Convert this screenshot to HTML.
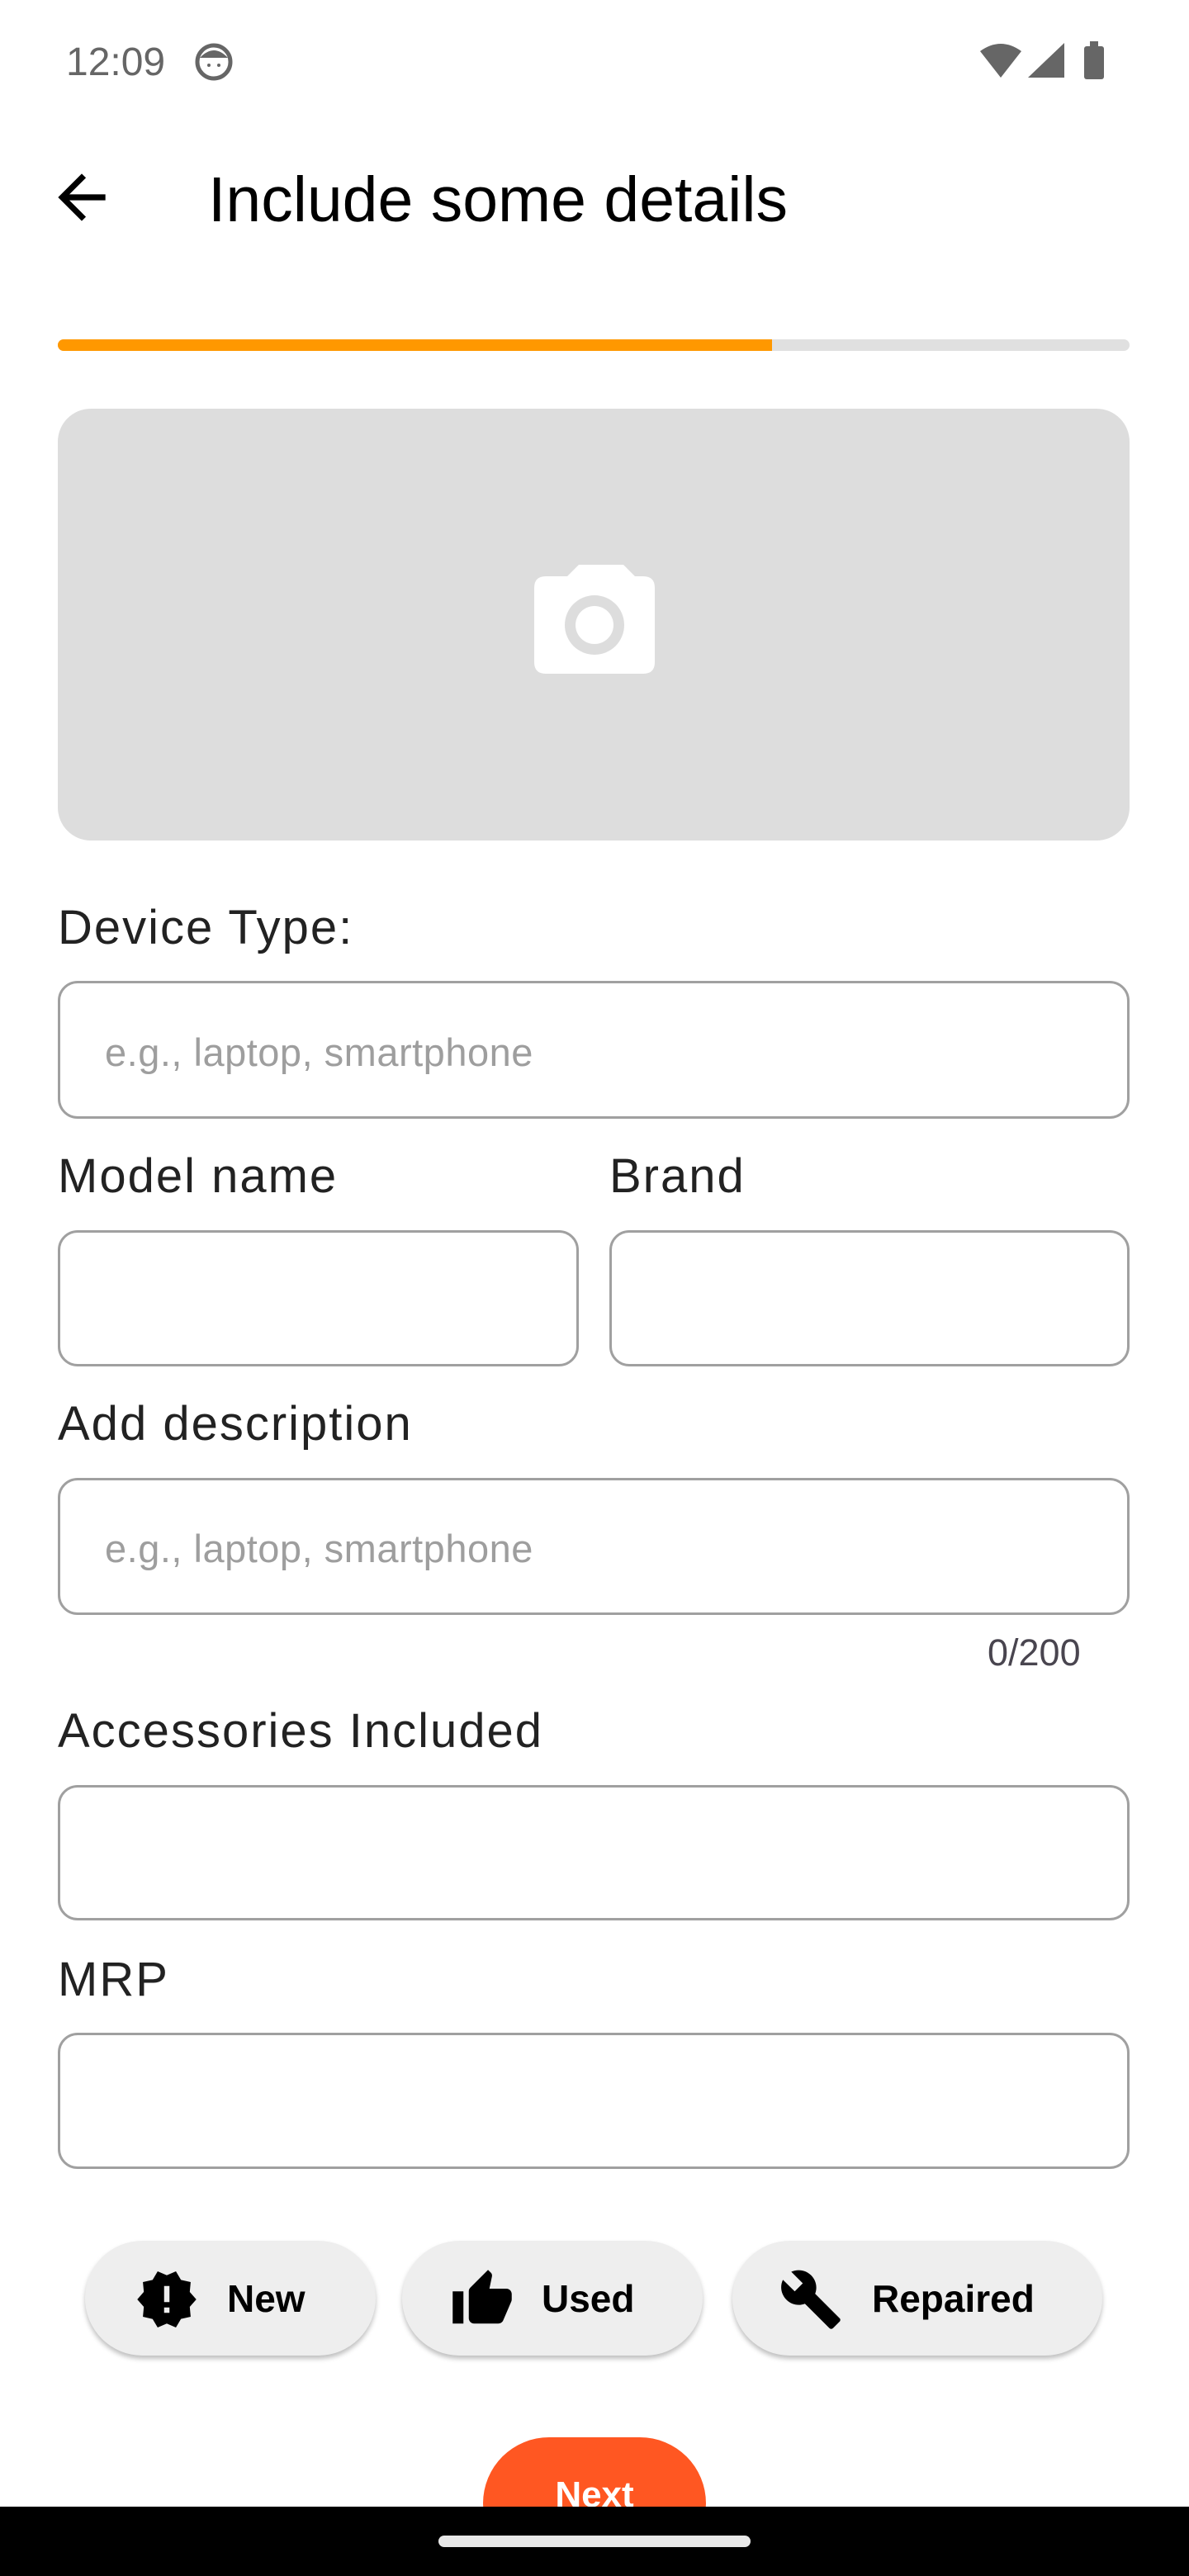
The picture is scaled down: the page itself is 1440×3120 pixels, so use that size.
<!DOCTYPE html>
<html><head><meta charset="utf-8"><style>
*{margin:0;padding:0;box-sizing:border-box}
body{width:1440px;height:3120px;background:#fff;position:relative;overflow:hidden;font-family:"Liberation Sans",sans-serif}
.a{position:absolute}
.lbl{position:absolute;left:70px;font-size:58px;color:#222;line-height:1;letter-spacing:2px}
.box{position:absolute;border:3px solid #a0a0a0;border-radius:24px}
.ph{position:absolute;left:127px;font-size:47px;color:#9e9e9e;line-height:1;letter-spacing:0.5px}
.chip{position:absolute;top:2714px;height:139px;border-radius:70px;background:#eee;box-shadow:0 4px 6px rgba(0,0,0,.25)}
.chip span{position:absolute;top:47px;font-size:46px;font-weight:bold;color:#000;line-height:1}
.chip svg{position:absolute;top:32px;width:78px;height:78px}
</style></head><body>
<div class="a" style="left:80px;top:52px;font-size:48px;color:#666;line-height:1">12:09</div>
<svg class="a" style="left:236px;top:52px" width="46" height="46" viewBox="0 0 46 46"><circle cx="23" cy="23" r="20" fill="none" stroke="#666" stroke-width="5"/><path d="M6 18 Q23 0 40 18 Z" fill="#666"/><circle cx="17" cy="27" r="2" fill="#666"/><circle cx="29" cy="27" r="2" fill="#666"/></svg>
<svg class="a" style="left:1185px;top:50px" width="160" height="46" viewBox="0 0 160 46"><path d="M2 12 Q27 -6 52 12 L27 44 Z" fill="#666"/><path d="M60 44 L104 2 L104 44 Z" fill="#666"/><rect x="128" y="6" width="24" height="40" rx="3" fill="#666"/><rect x="135" y="0" width="10" height="8" fill="#666"/></svg>
<svg class="a" style="left:56px;top:196px" width="86" height="86" viewBox="0 0 24 24"><path d="M20 11H7.83l5.59-5.59L12 4l-8 8 8 8 1.41-1.41L7.83 13H20v-2z" fill="#000"/></svg>
<div class="a" style="left:252px;top:204px;font-size:77px;color:#000;line-height:1">Include some details</div>
<div class="a" style="left:70px;top:411px;width:1298px;height:14px;border-radius:7px;background:#e0e0e0;overflow:hidden"><div style="width:865px;height:14px;background:#ff9800"></div></div>
<div class="a" style="left:70px;top:495px;width:1298px;height:523px;border-radius:40px;background:#ddd"></div>
<svg class="a" style="left:647px;top:684px" width="146" height="132" viewBox="0 0 146 132"><path d="M40 14 L54 0 L108 0 L122 14 L132 14 Q146 14 146 28 L146 118 Q146 132 132 132 L14 132 Q0 132 0 118 L0 28 Q0 14 14 14 Z" fill="#fff"/><circle cx="73" cy="73" r="36" fill="#ddd"/><circle cx="73" cy="73" r="23" fill="#fff"/></svg>
<div class="lbl" style="top:1095px">Device Type:</div>
<div class="box" style="left:70px;top:1188px;width:1298px;height:167px"></div>
<div class="ph" style="top:1251px">e.g., laptop, smartphone</div>
<div class="lbl" style="top:1396px">Model name</div>
<div class="lbl" style="top:1396px;left:738px">Brand</div>
<div class="box" style="left:70px;top:1490px;width:631px;height:165px"></div>
<div class="box" style="left:738px;top:1490px;width:630px;height:165px"></div>
<div class="lbl" style="top:1696px">Add description</div>
<div class="box" style="left:70px;top:1790px;width:1298px;height:166px"></div>
<div class="ph" style="top:1852px">e.g., laptop, smartphone</div>
<div class="a" style="left:1196px;top:1979px;font-size:45px;color:#49454f;line-height:1">0/200</div>
<div class="lbl" style="top:2068px">Accessories Included</div>
<div class="box" style="left:70px;top:2162px;width:1298px;height:164px"></div>
<div class="lbl" style="top:2369px">MRP</div>
<div class="box" style="left:70px;top:2462px;width:1298px;height:165px"></div>
<div class="chip" style="left:103px;width:352px"><svg style="left:60px" viewBox="0 0 24 24"><path d="M23 12l-2.44-2.78.34-3.68-3.61-.82-1.89-3.18L12 3 8.6 1.54 6.71 4.72l-3.61.81.34 3.68L1 12l2.44 2.78-.34 3.690 3.61.82 1.89 3.18L12 21l3.4 1.46 1.89-3.18 3.61-.82-.34-3.68L23 12zm-10 5h-2v-2h2v2zm0-4h-2V7h2v6z"/></svg><span style="left:172px">New</span></div>
<div class="chip" style="left:487px;width:364px"><svg style="left:58px" viewBox="0 0 24 24"><path d="M1 21h4V9H1v12zm22-11c0-1.1-.9-2-2-2h-6.31l.95-4.57.03-.32c0-.41-.17-.79-.44-1.06L14.17 1 7.59 7.59C7.220 7.95 7 8.45 7 9v10c0 1.1.9 2 2 2h9c.83 0 1.54-.5 1.84-1.22l3.02-7.05c.09-.23.14-.47.14-.73v-2z"/></svg><span style="left:169px">Used</span></div>
<div class="chip" style="left:887px;width:448px"><svg style="left:56px" viewBox="0 0 24 24"><path d="M22.7 19l-9.1-9.1c.9-2.3.4-5-1.5-6.9-2-2-5-2.4-7.4-1.3L9 6 6 9 1.6 4.7C.4 7.1.9 10.1 2.9 12.1c1.9 1.9 4.6 2.4 6.9 1.5l9.1 9.1c.4.4 1 .4 1.4 0l2.3-2.3c.5-.4.5-1.1.1-1.4z"/></svg><span style="left:169px">Repaired</span></div>
<div class="a" style="left:585px;top:2952px;width:270px;height:160px;border-radius:80px;background:#ff5722"><div style="position:absolute;left:0;width:270px;top:48px;text-align:center;color:#fff;font-weight:bold;font-size:44px;line-height:1">Next</div></div>
<div class="a" style="left:0;top:3036px;width:1440px;height:84px;background:#000"><div style="position:absolute;left:531px;top:35px;width:378px;height:14px;border-radius:7px;background:#e8e8e8"></div></div>
</body></html>
